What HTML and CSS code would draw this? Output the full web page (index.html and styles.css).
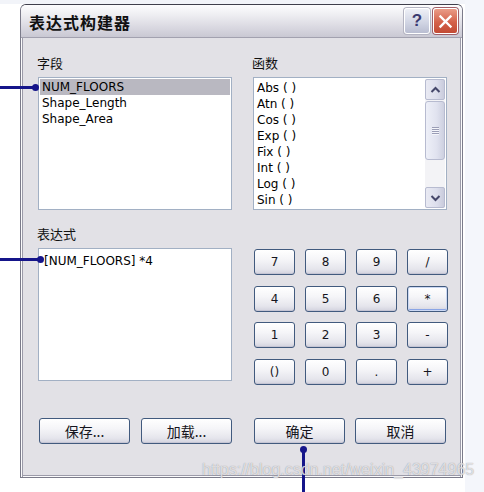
FILE: index.html
```html
<!DOCTYPE html>
<html lang="zh-CN">
<head>
<meta charset="utf-8">
<title>表达式构建器</title>
<link rel="stylesheet" href="styles.css">
</head>
<body>
<div class="page">
  <main class="stage">
    <div class="topband"></div>
    <div class="dialog">
      <header class="titlebar">
        <span class="title">表达式构建器</span>
        <div class="caption-btns">
          <button class="cap help" type="button">?</button>
          <button class="cap close" type="button" aria-label="关闭">
            <svg width="15" height="15" viewBox="0 0 15 15"><path d="M2.5 2.5 L12.5 12.5 M12.5 2.5 L2.5 12.5" stroke="#fff" stroke-width="2.4" stroke-linecap="square" fill="none"/></svg>
          </button>
        </div>
      </header>
      <section class="body">
        <div class="grid">
          <div class="label">字段</div>
          <div class="label">函数</div>

          <ul class="listbox fields">
            <li class="sel">NUM_FLOORS</li>
            <li>Shape_Length</li>
            <li>Shape_Area</li>
          </ul>

          <div class="listbox funcs">
            <ul>
              <li>Abs ( )</li>
              <li>Atn ( )</li>
              <li>Cos ( )</li>
              <li>Exp ( )</li>
              <li>Fix ( )</li>
              <li>Int ( )</li>
              <li>Log ( )</li>
              <li>Sin ( )</li>
            </ul>
            <div class="scrollbar">
              <div class="sb-btn">
                <svg width="11" height="8" viewBox="0 0 11 8"><path d="M1.5 6 L5.5 2 L9.5 6" stroke="#45476a" stroke-width="2" fill="none"/></svg>
              </div>
              <div class="sb-thumb"><span class="grip"></span></div>
              <div class="sb-track"></div>
              <div class="sb-btn">
                <svg width="11" height="8" viewBox="0 0 11 8"><path d="M1.5 2 L5.5 6 L9.5 2" stroke="#45476a" stroke-width="2" fill="none"/></svg>
              </div>
            </div>
          </div>

          <div class="label">表达式</div>
          <div></div>

          <div class="expr">[NUM_FLOORS] *4</div>

          <div class="keypad">
            <button class="btn" type="button">7</button>
            <button class="btn" type="button">8</button>
            <button class="btn" type="button">9</button>
            <button class="btn" type="button">/</button>
            <button class="btn" type="button">4</button>
            <button class="btn" type="button">5</button>
            <button class="btn" type="button">6</button>
            <button class="btn focus" type="button">*</button>
            <button class="btn" type="button">1</button>
            <button class="btn" type="button">2</button>
            <button class="btn" type="button">3</button>
            <button class="btn" type="button">-</button>
            <button class="btn" type="button">()</button>
            <button class="btn" type="button">0</button>
            <button class="btn" type="button">.</button>
            <button class="btn" type="button">+</button>
          </div>

          <div class="actions left">
            <button class="btn wide" type="button">保存...</button>
            <button class="btn wide" type="button">加载...</button>
          </div>
          <div class="actions right">
            <button class="btn wide" type="button">确定</button>
            <button class="btn wide" type="button">取消</button>
          </div>
        </div>
      </section>
    </div>

    <!-- annotation pointers -->
    <div class="callout c-fields"></div>
    <div class="callout c-expr"></div>
    <div class="callout c-ok"></div>

    <div class="watermark">https://blog.csdn.net/weixin_43974965</div>
  </main>
  <aside class="edge"></aside>
</div>
</body>
</html>
```

FILE: styles.css
```css
* { box-sizing: border-box; }

html, body { margin: 0; padding: 0; }

body {
  width: 484px;
  height: 492px;
  overflow: hidden;
  background: #ffffff;
  font-family: "DejaVu Sans", "Noto Sans CJK SC", sans-serif;
  font-size: 12px;
  color: #000;
}

.page {
  display: flex;
  height: 492px;
}

.stage {
  position: relative;
  width: 465px;
  flex: none;
}

.topband {
  height: 4px;
  background: #f2f4f9;
}

.edge {
  flex: 1;
  background: #f4f6fb;
}

/* window frame */
.dialog {
  margin-left: 20px;
  width: 443px;
  height: 474px;
  display: flex;
  flex-direction: column;
  border: 1px solid #7b7b8a;
  border-top-color: #3f3f4c;
  border-radius: 6px 6px 0 0;
  background: #e2e1e6;
}

.titlebar {
  flex: none;
  height: 33px;
  display: flex;
  align-items: center;
  padding: 0 4px 0 8px;
  border-radius: 5px 5px 0 0;
  border-bottom: 1px solid #a2a1af;
  background: linear-gradient(#fdfdfe 0%, #f1f1f4 25%, #dcdbe3 65%, #c9c8d3 100%);
}

.title {
  flex: 1;
  font-family: "Noto Sans CJK SC", sans-serif;
  font-weight: 700;
  font-size: 16px;
  letter-spacing: 1px;
  color: #111;
  padding-top: 1px;
}

.caption-btns {
  display: flex;
  gap: 3px;
}

.cap {
  width: 26px;
  height: 26px;
  padding: 0;
  border: 1px solid #fff;
  border-radius: 3px;
  display: flex;
  align-items: center;
  justify-content: center;
  box-shadow: 0 0 0 1px #b4b4c2;
}

.help {
  width: 26px;
  background: linear-gradient(#eef0f7, #cfd3e2 60%, #b9bdd1);
  font-family: "Liberation Sans", sans-serif;
  font-weight: 700;
  font-size: 17px;
  color: #3a3a70;
}

.close {
  width: 25px;
  background: linear-gradient(#ea9c88, #d4614a 55%, #c24a34);
  box-shadow: 0 0 0 1px #a0606a;
}

/* client area */
.body {
  flex: 1;
  position: relative;
  padding: 17px 0 0 17px;
  box-shadow:
    inset 1px 0 #fbfbfc,
    inset 2px 0 #9c9ba9,
    inset -1px 0 #fbfbfc,
    inset -2px 0 #9c9ba9,
    inset 0 -1px #fbfbfc,
    inset 0 -2px #9c9ba9;
}

.grid {
  display: grid;
  grid-template-columns: 194px 194px;
  column-gap: 21px;
  grid-template-rows: 22px 149px 22px 170px 26px;
  align-items: start;
}

.label {
  font-family: "Noto Sans CJK SC", sans-serif;
  font-size: 13px;
  line-height: 16px;
  margin-left: -1px;
  color: #111;
}

.listbox {
  height: 133px;
  margin: 0;
  border: 1px solid #a2b0c4;
  background: #fff;
  overflow: hidden;
}

.fields {
  list-style: none;
  padding: 1px;
}

.fields li {
  line-height: 16px;
  padding-left: 2px;
}

.fields li.sel {
  background: #b9b8c1;
}

.funcs {
  display: flex;
}

.funcs ul {
  flex: 1;
  list-style: none;
  margin: 0;
  padding: 2px 0 0 3px;
  overflow: hidden;
}

.funcs li {
  line-height: 16px;
  white-space: nowrap;
}

/* vertical scroll bar */
.scrollbar {
  width: 20px;
  margin: 1px 1px 1px 0;
  display: flex;
  flex-direction: column;
  background: #f3f3f6;
}

.sb-btn {
  height: 21px;
  flex: none;
  display: flex;
  align-items: center;
  justify-content: center;
  border: 1px solid #b7bbd0;
  border-radius: 2px;
  background: linear-gradient(90deg, #e9eaf3, #dcdeec 60%, #c9cbdc);
}

.sb-thumb {
  height: 59px;
  margin-top: 1px;
  flex: none;
  display: flex;
  align-items: center;
  justify-content: center;
  border: 1px solid #b7bbd0;
  border-radius: 3px;
  background: linear-gradient(90deg, #eef0f8, #e0e2ef 60%, #cdd0e0);
}

.grip {
  width: 7px;
  height: 8px;
  background: repeating-linear-gradient(#9a9db6 0 1px, #f4f5fa 1px 2px);
}

.sb-track {
  flex: 1;
}

/* expression box */
.expr {
  height: 133px;
  border: 1px solid #a2b0c4;
  background: #fff;
  padding: 4px 5px 3px;
  line-height: 16px;
}

/* calculator keys */
.keypad {
  display: grid;
  grid-template-columns: repeat(4, 41px);
  grid-auto-rows: 26px;
  column-gap: 10px;
  row-gap: 10.5px;
  margin: 1px 0 0 1px;
}

.btn {
  padding: 0;
  border: 1px solid #415a7e;
  border-radius: 3px;
  background: linear-gradient(#ffffff 0%, #f5f5f8 40%, #e5e5ec 80%, #d2d2de 100%);
  box-shadow: inset 0 -1px #c5c5d4;
  font-family: "DejaVu Sans", "Noto Sans CJK SC", sans-serif;
  font-size: 12px;
  color: #151520;
}

.btn.focus {
  box-shadow: inset 0 0 0 1px #cbd8f4, inset 0 -2px #8aa5e6;
}

.actions {
  display: flex;
  padding-left: 1px;
}

.actions.left { gap: 11px; }
.actions.right { gap: 10px; }

.btn.wide {
  width: 91px;
  height: 26px;
  font-family: "Noto Sans CJK SC", sans-serif;
  font-size: 14px;
}

/* annotation pointers */
.callout {
  position: absolute;
  background: #15158a;
}

.callout::after {
  content: "";
  position: absolute;
  width: 7px;
  height: 7px;
  border-radius: 50%;
  background: #15158a;
}

.c-fields {
  left: 0;
  top: 86px;
  width: 36px;
  height: 3px;
}

.c-fields::after { right: -3px; top: -2px; }

.c-expr {
  left: 0;
  top: 258px;
  width: 41px;
  height: 3px;
}

.c-expr::after { right: -3px; top: -2px; }

.c-ok {
  left: 302px;
  top: 449px;
  width: 3px;
  height: 43px;
}

.c-ok::after { left: -2px; top: -3px; }

.watermark {
  position: absolute;
  left: 202px;
  top: 461px;
  font-family: "Liberation Sans", sans-serif;
  font-size: 16px;
  line-height: 18px;
  white-space: nowrap;
  color: rgba(255, 255, 255, 0.7);
  text-shadow: 0 0 1px rgba(110, 110, 120, 0.8);
}
```
